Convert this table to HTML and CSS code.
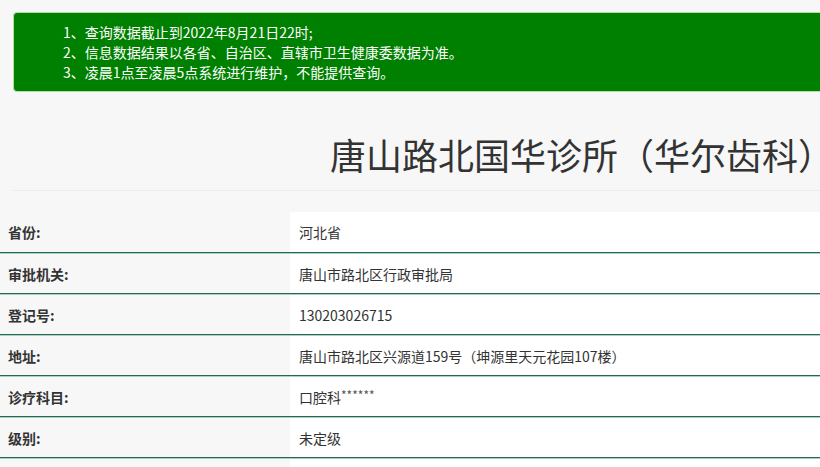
FILE: index.html
```html
<!DOCTYPE html>
<html lang="zh-CN">
<head>
<meta charset="utf-8">
<title>唐山路北国华诊所（华尔齿科）</title>
<link rel="stylesheet" href="styles.css">
</head>
<body>
<div class="page">
  <div class="notice">
    <p>1、查询数据截止到2022年8月21日22时;</p>
    <p>2、信息数据结果以各省、自治区、直辖市卫生健康委数据为准。</p>
    <p>3、凌晨1点至凌晨5点系统进行维护，不能提供查询。</p>
  </div>
  <div class="head">
    <h1 class="title">唐山路北国华诊所（华尔齿科）</h1>
  </div>
  <div class="table">
    <div class="row"><div class="label">省份:</div><div class="value">河北省</div></div>
    <div class="row"><div class="label">审批机关:</div><div class="value">唐山市路北区行政审批局</div></div>
    <div class="row"><div class="label">登记号:</div><div class="value">130203026715</div></div>
    <div class="row"><div class="label">地址:</div><div class="value">唐山市路北区兴源道159号（坤源里天元花园107楼）</div></div>
    <div class="row"><div class="label">诊疗科目:</div><div class="value">口腔科<span class="stars">******</span></div></div>
    <div class="row"><div class="label">级别:</div><div class="value">未定级</div></div>
    <div class="row"><div class="label"></div><div class="value"></div></div>
  </div>
</div>
</body>
</html>
```

FILE: styles.css
```css
html, body {
  margin: 0;
  padding: 0;
  background: #f7f7f7;
  overflow: hidden;
}
body {
  font-family: "Microsoft YaHei", "Noto Sans CJK SC", "Noto Sans", sans-serif;
  color: #333;
}
.page {
  width: 860px;
  padding-top: 12px;
}
.notice {
  margin-left: 13px;
  background: #008000;
  border: 1px solid #b9dca6;
  border-radius: 4px 0 0 4px;
  padding: 9px 0 9px 49px;
  color: #fff;
  font-size: 14px;
  line-height: 20px;
}
.notice p {
  margin: 0;
}
.head {
  margin-left: 13px;
  margin-top: 40px;
  padding-bottom: 14px;
  border-bottom: 1px solid #ececec;
}
.title {
  margin: 0;
  padding-left: 317px;
  font-size: 36px;
  line-height: 44px;
  font-weight: 400;
  white-space: nowrap;
  color: #333;
}
.table {
  margin-top: 21px;
  font-size: 14px;
}
.row {
  display: flex;
  height: 39px;
  border-bottom: 1px solid #2c6652;
}
.row + .row {
  border-top: 1px solid #a6d3c4;
}
.row:first-child {
  height: 40px;
}
.label {
  width: 282px;
  padding-left: 8px;
  display: flex;
  align-items: center;
  font-weight: 700;
  color: #333;
}
.value {
  flex: 1;
  background: #fff;
  padding-left: 9px;
  display: flex;
  align-items: center;
  color: #333;
}
.stars {
  font-size: 12px;
  color: #555;
  margin-top: -4px;
}
```
